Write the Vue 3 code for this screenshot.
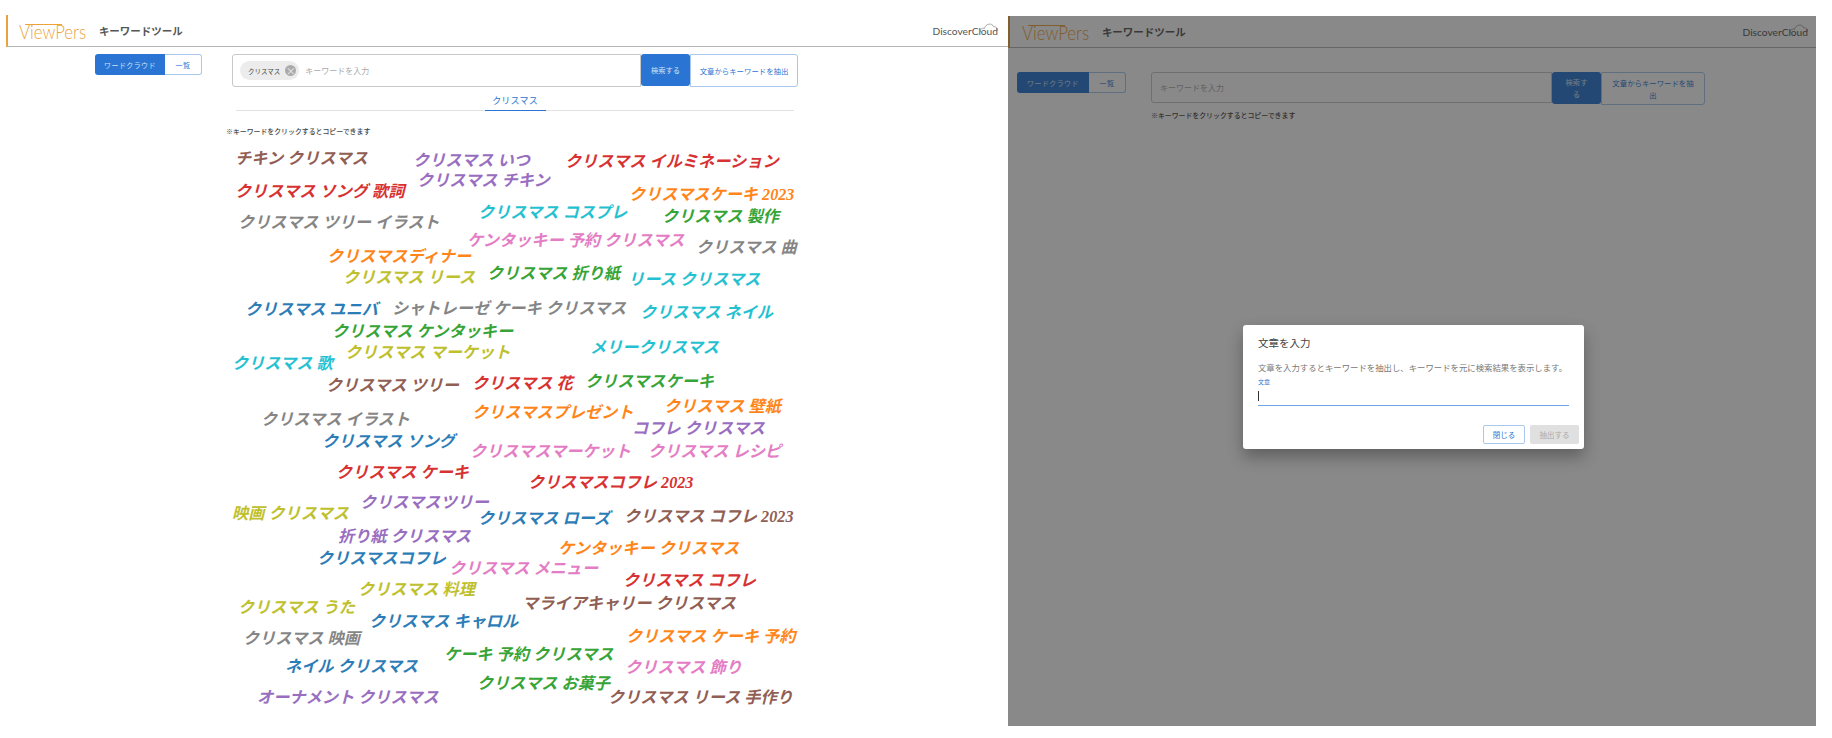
<script setup>
const c = {
  blue: '#1f77b4', orange: '#ff7f0e', green: '#2ca02c', red: '#d62728', purple: '#9467bd',
  brown: '#8c564b', pink: '#e377c2', gray: '#7f7f7f', olive: '#bcbd22', cyan: '#17becf'
};

// x, y = left edge and middle of the word, in page pixels
const words = [
  ['チキン クリスマス', 237, 159, c.brown],
  ['クリスマス いつ', 415, 161, c.purple],
  ['クリスマス イルミネーション', 567, 162, c.red],
  ['クリスマス チキン', 419, 181, c.purple],
  ['クリスマス ソング 歌詞', 237, 192, c.red],
  ['クリスマスケーキ 2023', 631, 195, c.orange],
  ['クリスマス コスプレ', 480, 213, c.cyan],
  ['クリスマス 製作', 664, 217, c.green],
  ['クリスマス ツリー イラスト', 240, 223, c.gray],
  ['ケンタッキー 予約 クリスマス', 469, 241, c.pink],
  ['クリスマス 曲', 698, 248, c.gray],
  ['クリスマスディナー', 329, 257, c.orange],
  ['クリスマス リース', 345, 278, c.olive],
  ['クリスマス 折り紙', 489, 274, c.green],
  ['リース クリスマス', 630, 280, c.cyan],
  ['クリスマス ユニバ', 247, 310, c.blue],
  ['シャトレーゼ ケーキ クリスマス', 394, 309, c.gray],
  ['クリスマス ネイル', 642, 313, c.cyan],
  ['クリスマス ケンタッキー', 334, 332, c.green],
  ['クリスマス マーケット', 347, 353, c.olive],
  ['メリークリスマス', 592, 348, c.cyan],
  ['クリスマス 歌', 234, 364, c.cyan],
  ['クリスマス ツリー', 328, 386, c.brown],
  ['クリスマス 花', 474, 384, c.red],
  ['クリスマスケーキ', 587, 382, c.green],
  ['クリスマス イラスト', 263, 420, c.gray],
  ['クリスマスプレゼント', 474, 413, c.orange],
  ['クリスマス 壁紙', 666, 407, c.orange],
  ['コフレ クリスマス', 634, 429, c.purple],
  ['クリスマス ソング', 324, 442, c.blue],
  ['クリスマスマーケット', 472, 452, c.pink],
  ['クリスマス レシピ', 650, 452, c.pink],
  ['クリスマス ケーキ', 338, 473, c.red],
  ['クリスマスコフレ 2023', 530, 483, c.red],
  ['クリスマスツリー', 362, 503, c.purple],
  ['映画 クリスマス', 234, 514, c.olive],
  ['クリスマス ローズ', 480, 519, c.blue],
  ['クリスマス コフレ 2023', 626, 517, c.brown],
  ['折り紙 クリスマス', 340, 537, c.purple],
  ['ケンタッキー クリスマス', 560, 549, c.orange],
  ['クリスマスコフレ', 319, 559, c.blue],
  ['クリスマス メニュー', 451, 569, c.pink],
  ['クリスマス コフレ', 625, 581, c.red],
  ['クリスマス 料理', 360, 590, c.olive],
  ['クリスマス うた', 240, 608, c.olive],
  ['マライアキャリー クリスマス', 524, 604, c.brown],
  ['クリスマス キャロル', 371, 622, c.blue],
  ['クリスマス 映画', 245, 639, c.gray],
  ['クリスマス ケーキ 予約', 628, 637, c.orange],
  ['ケーキ 予約 クリスマス', 446, 655, c.green],
  ['ネイル クリスマス', 287, 667, c.blue],
  ['クリスマス 飾り', 627, 668, c.pink],
  ['クリスマス お菓子', 479, 684, c.green],
  ['クリスマス リース 手作り', 610, 698, c.brown],
  ['オーナメント クリスマス', 259, 698, c.purple]
];

const wordStyle = (w) => ({ left: w[1] + 'px', top: w[2] + 'px', color: w[3] });
</script>

<template>
  <div class="screen">
    <section class="pane left-pane">
      <header class="app-header">
        <div class="brand"><span class="brand-text">ViewPers</span></div>
        <div class="tool-name">キーワードツール</div>
        <div class="discover">
          DiscoverCloud
          <svg class="cloud" viewBox="0 0 30 16" fill="none" stroke="#666" stroke-width="0.9">
            <path d="M1 15.5 C-1 10 5 8 7.5 9.5 C9 2 20 -1 23 7 C27 6 30 10 28.5 14" />
          </svg>
        </div>
      </header>
      <div class="tool-row">
        <div class="toggle">
          <button class="seg active">ワードクラウド</button>
          <button class="seg">一覧</button>
        </div>
        <div class="search">
          <div class="search-input">
            <span class="chip">クリスマス<i class="chip-x">×</i></span>
            <span class="placeholder">キーワードを入力</span>
          </div>
          <button class="search-btn">検索する</button>
          <button class="extract-btn">文章からキーワードを抽出</button>
        </div>
      </div>
      <div class="tabs"><span class="tab">クリスマス</span></div>
      <p class="note">※キーワードをクリックするとコピーできます</p>
      <span v-for="w in words" :key="w[0]" class="word" :style="wordStyle(w)">{{ w[0] }}</span>
    </section>

    <section class="pane right-pane">
      <header class="app-header">
        <div class="brand"><span class="brand-text">ViewPers</span></div>
        <div class="tool-name">キーワードツール</div>
        <div class="discover">
          DiscoverCloud
          <svg class="cloud" viewBox="0 0 30 16" fill="none" stroke="#666" stroke-width="0.9">
            <path d="M1 15.5 C-1 10 5 8 7.5 9.5 C9 2 20 -1 23 7 C27 6 30 10 28.5 14" />
          </svg>
        </div>
      </header>
      <div class="tool-row">
        <div class="toggle">
          <button class="seg active">ワードクラウド</button>
          <button class="seg">一覧</button>
        </div>
        <div class="search-col">
          <div class="search">
            <div class="search-input"><span class="placeholder">キーワードを入力</span></div>
            <button class="search-btn">検索する</button>
            <button class="extract-btn">文章からキーワードを抽出</button>
          </div>
          <p class="note">※キーワードをクリックするとコピーできます</p>
        </div>
      </div>

      <div class="overlay">
        <div class="dialog">
          <h2 class="dialog-title">文章を入力</h2>
          <p class="dialog-text">文章を入力するとキーワードを抽出し、キーワードを元に検索結果を表示します。</p>
          <label class="field-label">文章</label>
          <div class="field"><span class="caret"></span></div>
          <div class="dialog-actions">
            <button class="close-btn">閉じる</button>
            <button class="run-btn">抽出する</button>
          </div>
        </div>
      </div>
    </section>
  </div>
</template>

<style scoped>
.screen {
  display: flex;
  width: 1832px;
  height: 738px;
  overflow: hidden;
  background: #fff;
  font-family: "Noto Sans CJK JP", "Noto Sans", sans-serif;
  color: #333;
}
.pane {
  position: relative;
  box-sizing: border-box;
}
.left-pane {
  width: 1008px;
  padding-top: 15px;
}
.right-pane {
  width: 808px;
  height: 710px;
  margin-top: 16px;
}

.app-header {
  display: flex;
  align-items: center;
  height: 32px;
  box-sizing: border-box;
  border-bottom: 1px solid #b5b5b5;
  border-left: 2px solid #eda33c;
  margin-left: 6px;
  padding-left: 11px;
  padding-right: 10px;
}
.right-pane .app-header {
  margin-left: 0;
  padding-left: 12px;
  padding-right: 8px;
}
.brand {
  position: relative;
  flex: 0 0 75px;
  height: 16px;
}
.right-pane .brand {
  flex-basis: 79px;
}
.brand-text {
  display: block;
  font-family: Lato, sans-serif;
  font-weight: 300;
  font-size: 20px;
  line-height: 16px;
  color: #eda33c;
  white-space: nowrap;
  transform: scaleX(0.84);
  transform-origin: left center;
}
/* line that joins the V and the P */
.brand::before {
  content: "";
  position: absolute;
  left: 6px;
  top: 1px;
  width: 37px;
  height: 1px;
  background: #eda33c;
}
.tool-name {
  font-size: 10.5px;
  font-weight: 700;
  color: #555;
}
.discover {
  position: relative;
  margin-left: auto;
  font-family: Lato, sans-serif;
  font-size: 10.2px;
  color: #555;
}
.cloud {
  position: absolute;
  right: 0;
  top: -3px;
  width: 18px;
  height: 11px;
}

.tool-row {
  display: flex;
  align-items: flex-start;
  padding-top: 7px;
  padding-left: 95px;
}
.right-pane .tool-row {
  padding-top: 24px;
  padding-left: 9px;
}
.toggle {
  display: flex;
  width: 107px;
  height: 21px;
  margin-right: 30px;
}
.right-pane .toggle {
  width: 109px;
  margin-right: 25px;
}
button {
  font-family: inherit;
  box-sizing: border-box;
  padding: 0;
  cursor: pointer;
}
.seg {
  flex: 1;
  font-size: 7px;
  letter-spacing: 0.4px;
  border: 1px solid #a9c8ec;
  border-left: 0;
  border-radius: 0 3px 3px 0;
  background: #fff;
  color: #2a75d3;
}
.seg.active {
  flex: 0 0 70px;
  border: 0;
  border-radius: 3px 0 0 3px;
  background: #2a75d3;
  color: #cfe0f6;
}
.right-pane .seg.active {
  flex-basis: 72px;
}
.search {
  display: flex;
  width: 566px;
  height: 33px;
}
.search-input {
  display: flex;
  align-items: center;
  flex: 1;
  box-sizing: border-box;
  padding-left: 7px;
  border: 1px solid #c8c8c8;
  border-radius: 3px 0 0 3px;
}
.chip {
  display: flex;
  align-items: center;
  height: 19px;
  padding: 0 3px 0 8px;
  margin-right: 6px;
  border-radius: 10px;
  background: #ececec;
  font-size: 6.5px;
  color: #444;
}
.chip-x {
  width: 11px;
  height: 11px;
  margin-left: 5px;
  border-radius: 50%;
  background: #aaa;
  color: #eee;
  font-style: normal;
  font-size: 10px;
  line-height: 11px;
  text-align: center;
}
.placeholder {
  font-size: 8px;
  color: #aaa;
}
.search-btn {
  width: 49px;
  height: 32px;
  border: 0;
  border-radius: 3px;
  background: #2a75d3;
  color: #cfe0f6;
  font-size: 7.3px;
}
.extract-btn {
  width: 108px;
  height: 33px;
  border: 1px solid #a9c8ec;
  border-radius: 0 3px 3px 0;
  background: #fff;
  color: #2a75d3;
  font-size: 7.4px;
}
.right-pane .search-col {
  width: 554px;
}
.right-pane .search {
  width: 554px;
}
.right-pane .search-input {
  height: 31px;
  padding-left: 8px;
}
.right-pane .search-btn {
  flex: 0 0 49px;
  padding: 0 12px;
  line-height: 12px;
}
.right-pane .extract-btn {
  flex: 0 0 104px;
  padding: 0 9px;
  line-height: 12px;
}

.tabs {
  display: flex;
  justify-content: center;
  box-sizing: border-box;
  width: 558px;
  height: 24px;
  margin: 0 0 0 236px;
  border-bottom: 1px solid #e2e2e2;
}
.tab {
  box-sizing: border-box;
  height: 24px;
  width: 61px;
  padding-top: 7px;
  border-bottom: 1px solid #2a75d3;
  font-size: 9px;
  letter-spacing: 0.2px;
  line-height: 14px;
  text-align: center;
  color: #2a75d3;
}
.note {
  margin: 15px 0 0 226px;
  font-size: 6.9px;
  line-height: 10px;
  font-weight: 500;
  color: #444;
}
.right-pane .note {
  margin: 5px 0 0 0;
}

.word {
  position: absolute;
  transform: translateY(-50%);
  margin: 0 0 0 -2px;
  white-space: nowrap;
  font-family: "Liberation Serif", "Noto Sans CJK JP", serif;
  font-size: 16.2px;
  font-style: italic;
  font-weight: 700;
  line-height: 20px;
  opacity: 0.95;
}

.overlay {
  position: absolute;
  inset: 0;
  background: rgba(33, 33, 33, 0.53);
}
.dialog {
  position: absolute;
  left: 235px;
  top: 309px;
  box-sizing: border-box;
  width: 341px;
  height: 124px;
  padding: 11px 15px 0;
  border-radius: 3px;
  background: #fff;
  box-shadow: 0 8px 16px rgba(0, 0, 0, 0.3);
}
.dialog-title {
  margin: 0;
  font-size: 10.5px;
  font-weight: 400;
  line-height: 14px;
  color: #444;
}
.dialog-text {
  margin: 11px 0 0;
  font-size: 8.4px;
  line-height: 12px;
  white-space: nowrap;
  color: #777;
}
.field-label {
  display: block;
  margin-top: 5px;
  font-size: 6px;
  line-height: 8px;
  color: #2a75d3;
}
.field {
  height: 20px;
  width: 311px;
  padding-top: 5px;
  box-sizing: border-box;
  border-bottom: 1px solid #6ea5e6;
}
.caret {
  display: block;
  width: 1px;
  height: 10px;
  background: #333;
}
.dialog-actions {
  position: absolute;
  right: 5px;
  bottom: 5px;
  display: flex;
  gap: 5px;
}
.close-btn,
.run-btn {
  height: 19px;
  font-size: 7.5px;
  border-radius: 2px;
}
.close-btn {
  width: 42px;
  border: 1px solid #a9c8ec;
  background: #fff;
  color: #2a75d3;
}
.run-btn {
  width: 49px;
  border: 0;
  background: #e0e0e0;
  color: #aaa;
}
</style>

<style>
body {
  background: #fff;
}
</style>
